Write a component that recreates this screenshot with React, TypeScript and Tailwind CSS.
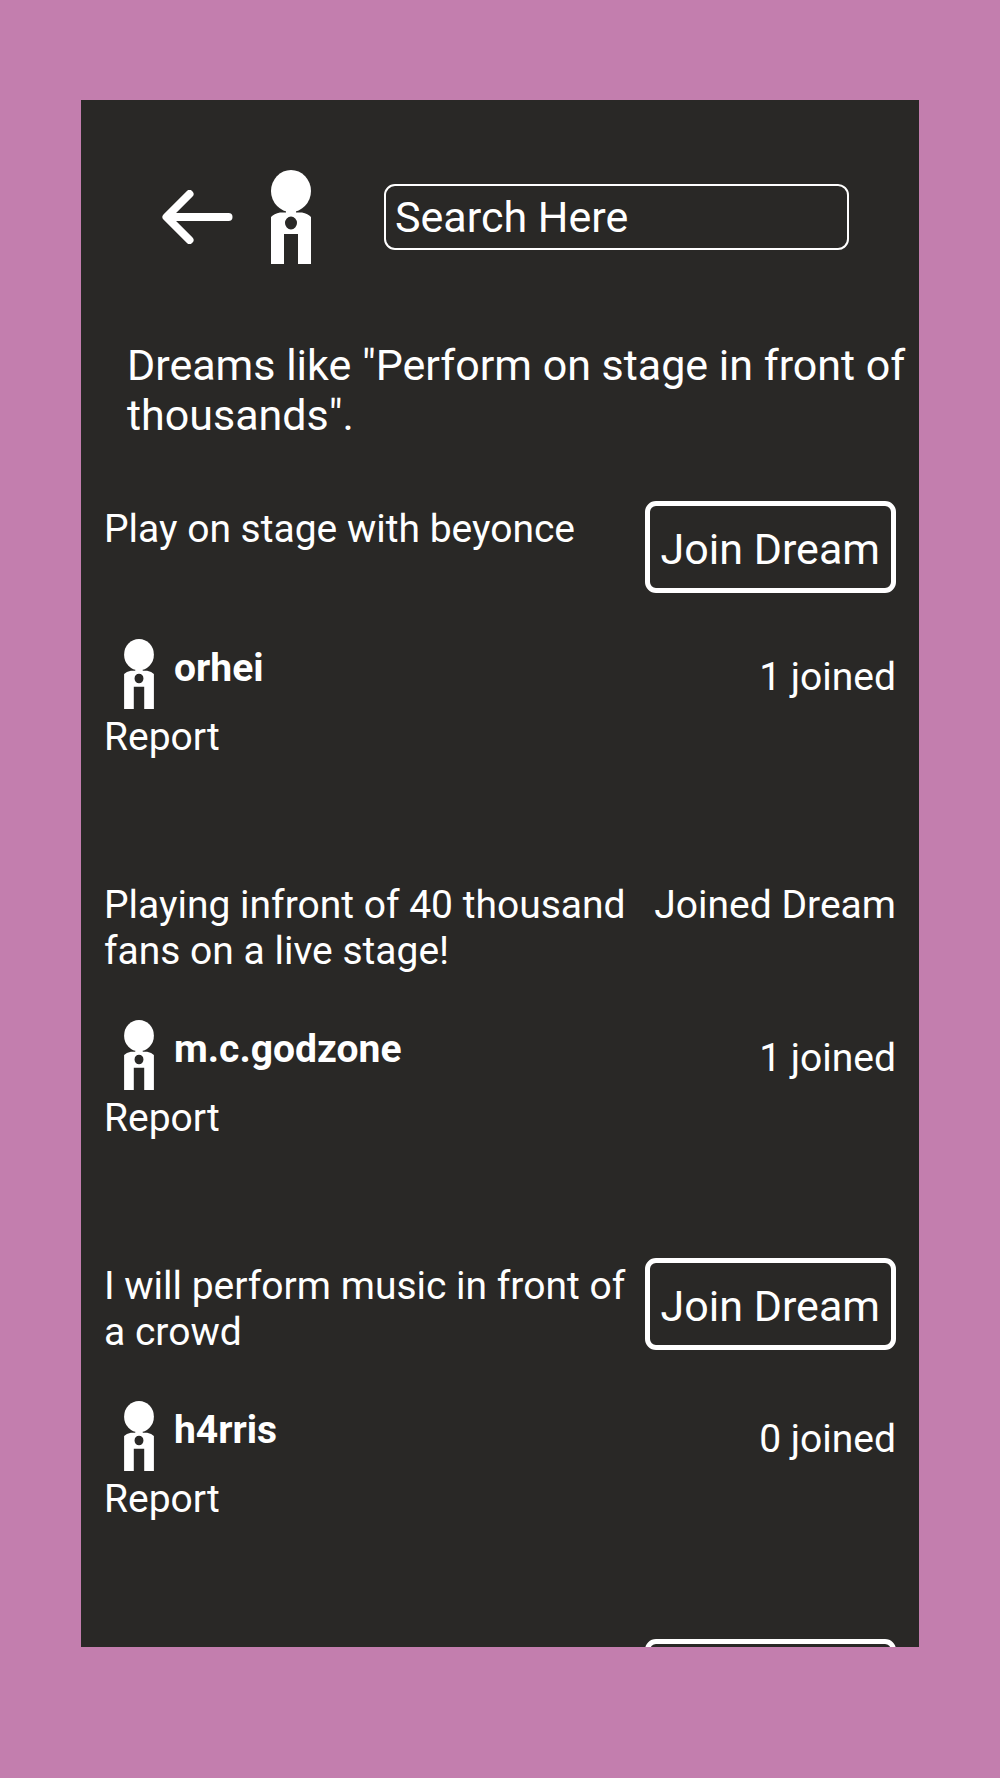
type Dream = {
  title: string;
  user?: string;
  joined?: number;
  isJoined?: boolean;
};

const dreams: Dream[] = [
  { title: "Play on stage with beyonce", user: "orhei", joined: 1 },
  {
    title: "Playing infront of 40 thousand fans on a live stage!",
    user: "m.c.godzone",
    joined: 1,
    isJoined: true,
  },
  {
    title: "I will perform music in front of a crowd",
    user: "h4rris",
    joined: 0,
  },
  { title: "" },
];

function Figure({ className }: { className: string }) {
  return (
    <svg viewBox="0 0 40 94" className={className} fill="currentColor" aria-hidden="true">
      <ellipse cx="20" cy="21" rx="20" ry="21" />
      <path
        fillRule="evenodd"
        d="M15 41H25V42.500H31Q37 43.500 40 47V94H27V64H13V94H0V47Q3 43.500 9 42.500H15ZM20 46.500a6 6.500 0 1 0 0 13a6 6.500 0 1 0 0-13Z"
      />
    </svg>
  );
}

function BackArrow() {
  return (
    <svg
      viewBox="0 0 71 54"
      className="h-[54px] w-[71px]"
      fill="none"
      stroke="currentColor"
      strokeWidth="8"
      strokeLinecap="round"
      strokeLinejoin="round"
      aria-hidden="true"
    >
      <path d="M27.500 4L4.500 27L27.500 50" />
      <path d="M6 27H66.500" />
    </svg>
  );
}

function DreamItem({ dream }: { dream: Dream }) {
  return (
    <li className="pb-[117px]">
      <div className="flex items-start justify-between gap-4">
        <p className="min-w-0 flex-1 pt-[5px]">{dream.title}</p>
        {dream.isJoined ? (
          <p className="shrink-0 pt-[5px]">Joined Dream</p>
        ) : (
          <button
            type="button"
            className="h-[92px] shrink-0 rounded-[11px] border-5 border-white px-[11px] pt-[3px] text-[43px] leading-[50px]"
          >
            Join Dream
          </button>
        )}
      </div>
      {dream.user && (
        <>
          <div className="mt-[46px] flex h-[70px] items-start justify-between">
            <a href="#profile" className="flex font-bold">
              <span className="flex w-[70px] justify-center">
                <Figure className="h-[70px] w-[30px]" />
              </span>
              <span className="pt-[6px]">{dream.user}</span>
            </a>
            <p className="pt-[15px]">{dream.joined} joined</p>
          </div>
          <button type="button" className="mt-[5px] block">
            Report
          </button>
        </>
      )}
    </li>
  );
}

export default function App() {
  return (
    <div className="flex h-screen flex-col bg-[#c37eae] px-[81px] pt-[100px] pb-[131px] font-[Roboto,sans-serif]">
      <main className="min-h-0 flex-1 overflow-y-auto bg-[#292826] text-[39px] leading-[46px] text-white [scrollbar-width:none]">
        <header className="flex items-center pt-[70px] pr-[70px] pl-[81px]">
          <button type="button" aria-label="Back">
            <BackArrow />
          </button>
          <a href="#home" aria-label="Home" className="mr-[73px] ml-[38px]">
            <Figure className="h-[94px] w-10" />
          </a>
          <input
            type="text"
            aria-label="Search"
            placeholder="Search Here"
            className="h-[66px] min-w-0 flex-1 rounded-[11px] border-2 border-white bg-transparent px-[9px] text-[43px] leading-[50px] placeholder:text-white placeholder:opacity-100"
          />
        </header>
        <h1 className="mt-[76px] pl-[46px] text-[43px] leading-[50px]">
          Dreams like "Perform on stage in front of thousands".
        </h1>
        <ul className="mt-[61px] px-[23px]">
          {dreams.map((dream, i) => (
            <DreamItem key={i} dream={dream} />
          ))}
        </ul>
      </main>
    </div>
  );
}
